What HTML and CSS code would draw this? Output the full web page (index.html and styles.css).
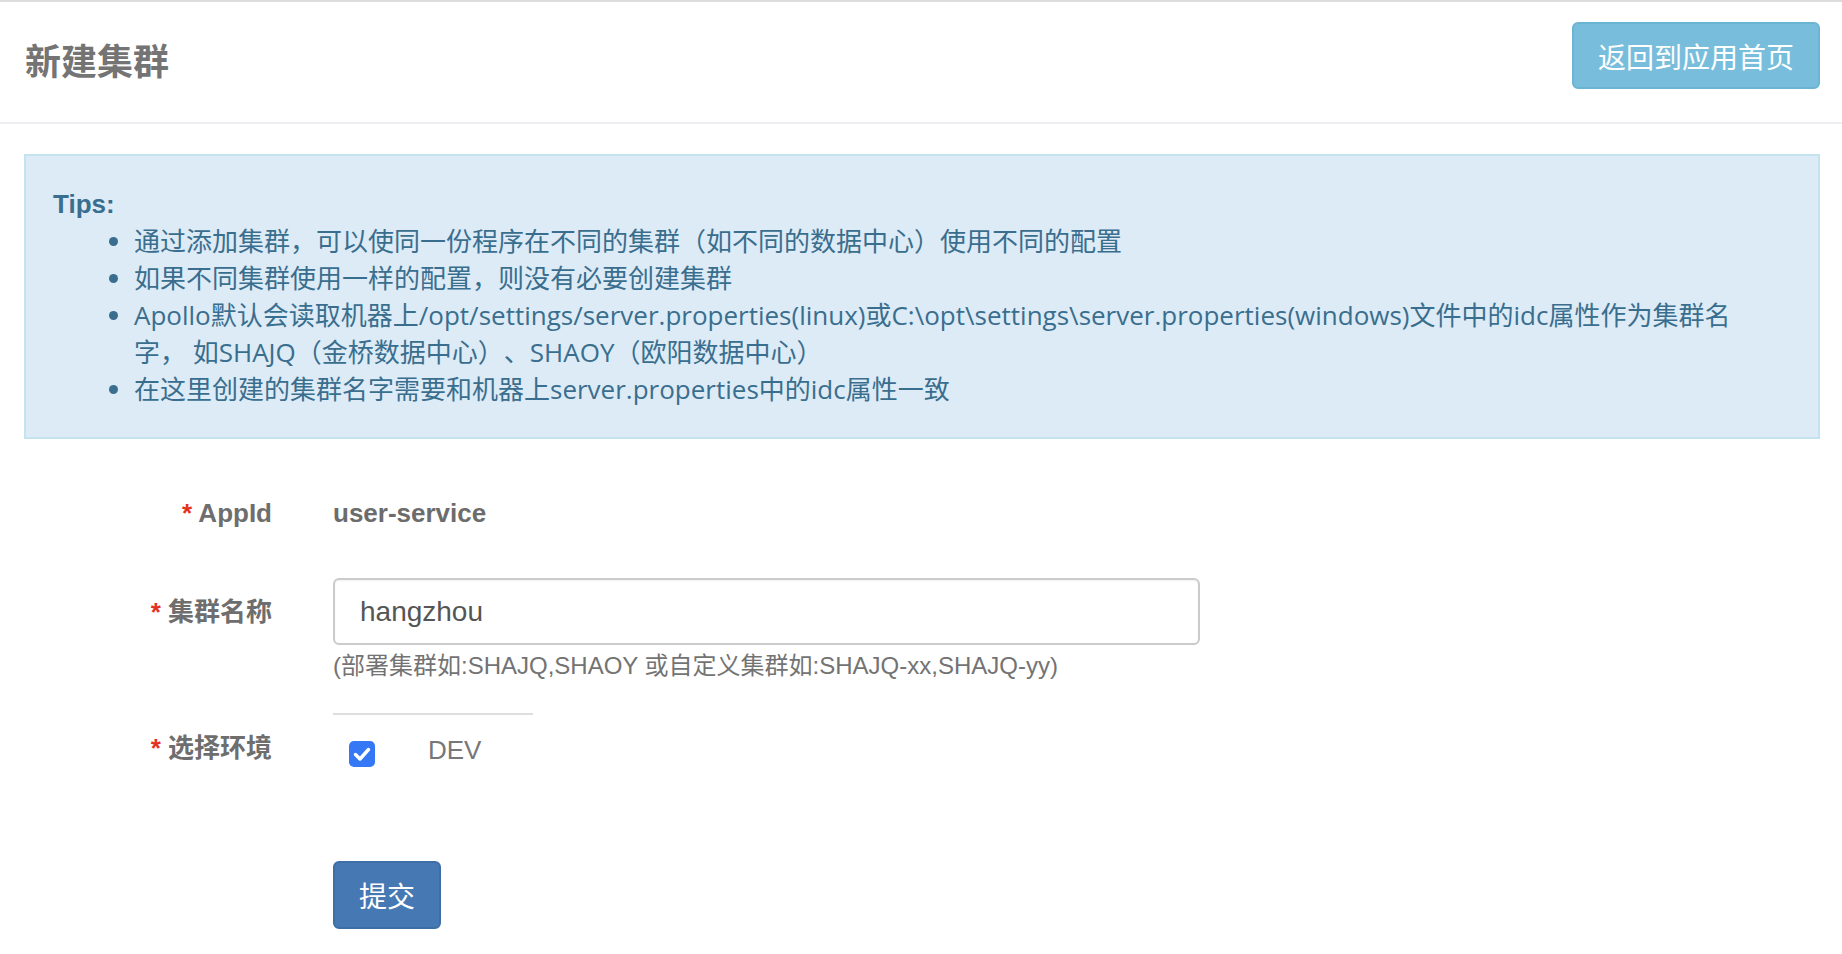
FILE: index.html
```html
<!DOCTYPE html>
<html lang="zh-CN">
<head>
<meta charset="utf-8">
<title>新建集群</title>
<link rel="stylesheet" href="styles.css">
</head>
<body>
<div class="page">
  <header class="head">
    <h1 class="title">新建集群</h1>
    <button class="btn btn-info" type="button">返回到应用首页</button>
  </header>
  <main class="content">
    <div class="tips">
      <div class="tips-title">Tips:</div>
      <ul class="tips-list">
        <li>通过添加集群，可以使同一份程序在不同的集群（如不同的数据中心）使用不同的配置</li>
        <li>如果不同集群使用一样的配置，则没有必要创建集群</li>
        <li>Apollo默认会读取机器上/opt/settings/server.properties(linux)或C:\opt\settings\server.properties(windows)文件中的idc属性作为集群名字， 如SHAJQ（金桥数据中心）、SHAOY（欧阳数据中心）</li>
        <li>在这里创建的集群名字需要和机器上server.properties中的idc属性一致</li>
      </ul>
    </div>
    <form class="form">
      <div class="row row-appid">
        <label class="lbl"><span class="req">*</span> AppId</label>
        <div class="static">user-service</div>
      </div>
      <div class="row row-cluster">
        <label class="lbl lbl-input"><span class="req">*</span> 集群名称</label>
        <div class="field">
          <input class="input" type="text" value="hangzhou">
          <div class="hint">(部署集群如:SHAJQ,SHAOY 或自定义集群如:SHAJQ-xx,SHAJQ-yy)</div>
        </div>
      </div>
      <div class="row row-sep">
        <div></div>
        <div class="sep"></div>
      </div>
      <div class="row row-env">
        <label class="lbl"><span class="req">*</span> 选择环境</label>
        <div class="env">
          <span class="cb"><svg viewBox="0 0 26 26" width="26" height="26"><path d="M6.5 13.5 L11 18 L19.5 8.5" fill="none" stroke="#fff" stroke-width="3.4" stroke-linecap="round" stroke-linejoin="round"/></svg></span>
          <span class="env-name">DEV</span>
        </div>
      </div>
      <div class="row row-submit">
        <div></div>
        <div><button class="btn btn-primary" type="button">提交</button></div>
      </div>
    </form>
  </main>
</div>
</body>
</html>
```

FILE: styles.css
```css
* { box-sizing: border-box; }

html, body {
  margin: 0;
  padding: 0;
  background: #fff;
}

body {
  font-family: "Liberation Sans", "Noto Sans CJK SC", sans-serif;
  color: #333;
  text-spacing-trim: space-all;
}

.page {
  border-top: 2px solid #dcdcdc;
}

.head {
  display: flex;
  justify-content: space-between;
  align-items: flex-start;
  height: 122px;
  padding: 0 22px 0 25px;
  border-bottom: 2px solid #efeff3;
}

.title {
  margin: 36px 0 0;
  font-size: 36px;
  line-height: 50px;
  font-weight: bold;
  color: #747474;
}

.btn {
  font-family: "Liberation Sans", "Noto Sans CJK SC", sans-serif;
  border-radius: 6px;
  color: #fff;
  cursor: pointer;
}

.btn-info {
  margin-top: 20px;
  width: 248px;
  height: 67px;
  background: #78bedc;
  border: 2px solid #6cb4d4;
  font-size: 28px;
  padding: 0;
}

.content {
  padding: 30px 22px 0 24px;
}

.tips {
  background: #ddebf6;
  border: 2px solid #c3e3ed;
  padding: 30px 27px 28px;
  color: #3a6e8e;
  font-family: "Open Sans", "Noto Sans CJK SC", sans-serif;
  font-size: 26px;
  line-height: 37px;
  height: 285px;
  text-spacing-trim: space-all;
}

.tips-title {
  font-family: "Liberation Sans", "Noto Sans CJK SC", sans-serif;
  font-weight: bold;
}

.tips-list {
  list-style: none;
  margin: 0;
  padding: 0 40px 0 81px;
}

.tips-list li {
  position: relative;
}

.tips-list li::before {
  content: "";
  position: absolute;
  left: -25px;
  top: 14px;
  width: 9px;
  height: 9px;
  border-radius: 50%;
  background: #3a6e8e;
}

.form {
  padding-top: 55px;
}

.row {
  display: grid;
  grid-template-columns: 248px 1fr;
  column-gap: 61px;
}

.lbl {
  text-align: right;
  font-size: 26px;
  font-weight: bold;
  line-height: 38px;
  color: #6e6e6e;
}

.req {
  color: #e3321e;
}

.static {
  font-size: 26px;
  font-weight: bold;
  line-height: 38px;
  color: #6c6c6c;
}

.row-cluster {
  margin-top: 46px;
}

.lbl-input {
  padding-top: 15px;
}

.input {
  display: block;
  width: 867px;
  height: 67px;
  border: 2px solid #cbcbcb;
  border-radius: 6px;
  padding: 0 25px;
  font-family: "Liberation Sans", "Noto Sans CJK SC", sans-serif;
  font-size: 28px;
  color: #555;
  box-shadow: inset 0 1px 2px rgba(0,0,0,0.06);
  outline: none;
}

.hint {
  margin-top: 7px;
  font-size: 24px;
  line-height: 28px;
  color: #737373;
}

.row-sep {
  margin-top: 33px;
}

.sep {
  width: 200px;
  height: 2px;
  background: #dedede;
}

.row-env {
  margin-top: 14px;
}

.env {
  display: flex;
  align-items: center;
  padding: 11px 0 0 16px;
  height: 38px;
}

.cb {
  display: inline-flex;
  width: 26px;
  height: 26px;
  border-radius: 5px;
  background: #3478f6;
}

.env-name {
  margin-left: 53px;
  margin-top: -6px;
  font-size: 26px;
  color: #777;
}

.row-submit {
  margin-top: 94px;
}

.btn-primary {
  width: 108px;
  height: 68px;
  padding: 0;
  background: #4679b3;
  border: 2px solid #3e6ea6;
  font-size: 28px;
}
```
